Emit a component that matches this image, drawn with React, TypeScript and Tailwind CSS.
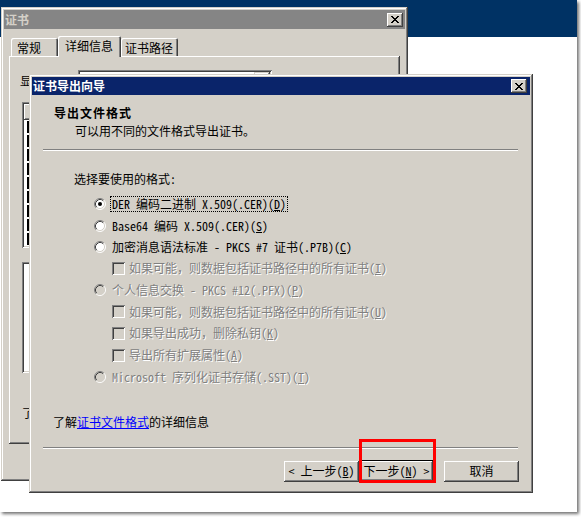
import React from "react";

function CloseX() {
  return (
    <svg width="8" height="7" viewBox="0 0 8 7" shapeRendering="crispEdges">
      <path
        fill="#000"
        d="M0 0h2v1H0z M6 0h2v1H6z M1 1h2v1H1z M5 1h2v1H5z M2 2h4v1H2z M3 3h2v1H3z M2 4h4v1H2z M1 5h2v1H1z M5 5h2v1H5z M0 6h2v1H0z M6 6h2v1H6z"
      />
    </svg>
  );
}

function CloseButton() {
  return (
    <div className="w-[16px] h-[14px] bg-[#d4d0c8] flex items-center justify-center shadow-[inset_-1px_-1px_#404040,inset_1px_1px_#ffffff,inset_-2px_-2px_#808080,inset_2px_2px_#d4d0c8]">
      <CloseX />
    </div>
  );
}

function Radio({ checked, disabled }: { checked?: boolean; disabled?: boolean }) {
  return (
    <svg width="12" height="12" viewBox="0 0 12 12" className="shrink-0">
      <circle cx="6" cy="6" r="5" fill={disabled ? "#d4d0c8" : "#ffffff"} />
      <path d="M2.11 9.89A5.5 5.5 0 0 1 9.89 2.11" fill="none" stroke="#808080" />
      <path d="M2.82 9.18A4.5 4.5 0 0 1 9.18 2.82" fill="none" stroke="#404040" />
      <path d="M9.89 2.11A5.5 5.5 0 0 1 2.11 9.89" fill="none" stroke="#ffffff" />
      <path d="M9.18 2.82A4.5 4.5 0 0 1 2.82 9.18" fill="none" stroke="#d4d0c8" />
      {checked && <circle cx="6" cy="6" r="2" fill="#000000" />}
    </svg>
  );
}

function Checkbox() {
  return (
    <span className="block shrink-0 w-[13px] h-[13px] bg-[#d4d0c8] shadow-[inset_1px_1px_#808080,inset_-1px_-1px_#ffffff,inset_2px_2px_#404040,inset_-2px_-2px_#d4d0c8]" />
  );
}

function U({ c }: { c: string }) {
  return <span className="underline underline-offset-1">{c}</span>;
}

const dis = "text-[#808080] [text-shadow:1px_1px_0_#ffffff]";

export default function App() {
  return (
    <div className="w-[581px] h-[517px] bg-white [font-family:'Noto_Sans_Mono_CJK_SC','Noto_Sans_CJK_SC','Noto_Sans',sans-serif] text-[12px] leading-[14px] text-black">
      <div className="relative w-[577px] h-[512px] bg-white overflow-hidden shadow-[2px_2px_3px_rgba(0,0,0,0.55)]">
        {/* desktop blue band */}
        <div className="h-[37px] w-full bg-[#003264]" />

        {/* background dialog: 证书 */}
        <div className="absolute left-[1px] top-[7px] w-[407px] h-[474px] bg-[#d4d0c8] p-[3px] flex flex-col shadow-[inset_-1px_-1px_#404040,inset_1px_1px_#d4d0c8,inset_-2px_-2px_#808080,inset_2px_2px_#ffffff]">
          <div className="h-[19px] bg-[#858585] flex items-center justify-between pl-[1px] pr-[2px]">
            <span className="font-bold text-[#d4d0c8]">证书</span>
            <CloseButton />
          </div>
          {/* tabs */}
          <div className="mt-[7px] ml-[7px] h-[20px] flex items-end relative z-10">
            <div className="w-[47px] h-[18px] pl-[6px] pt-[3px] rounded-t-[2px] bg-[#d4d0c8] shadow-[inset_1px_1px_#ffffff,inset_-1px_0_#404040,inset_-2px_0_#808080]">
              常规
            </div>
            <div className="w-[63px] h-[21px] -mb-[1px] pl-[7px] pt-[3px] rounded-t-[2px] bg-[#d4d0c8] shadow-[inset_1px_1px_#ffffff,inset_-1px_0_#404040,inset_-2px_0_#808080]">
              详细信息
            </div>
            <div className="w-[57px] h-[18px] pl-[4px] pt-[3px] rounded-t-[2px] bg-[#d4d0c8] shadow-[inset_1px_1px_#ffffff,inset_-1px_0_#404040,inset_-2px_0_#808080]">
              证书路径
            </div>
          </div>
          {/* tab panel */}
          <div className="ml-[5px] w-[391px] h-[388px] flex flex-col shadow-[inset_-1px_-1px_#404040,inset_1px_1px_#ffffff,inset_-2px_-2px_#808080]">
            <div className="mt-[14px] ml-[11px] h-[21px] flex items-center">
              <span className="w-[58px]">
                显示(<U c="S" />):
              </span>
              <div className="w-[194px] h-[21px] bg-white flex justify-end p-[2px] shadow-[inset_1px_1px_#808080,inset_-1px_-1px_#ffffff,inset_2px_2px_#404040,inset_-2px_-2px_#d4d0c8]">
                <div className="w-[16px] h-full bg-[#d4d0c8] shadow-[inset_-1px_-1px_#404040,inset_1px_1px_#d4d0c8,inset_-2px_-2px_#808080,inset_2px_2px_#ffffff]" />
              </div>
            </div>
            <div className="mt-[11px] ml-[13px] w-[366px] h-[146px] bg-white p-[2px] flex flex-col shadow-[inset_1px_1px_#808080,inset_-1px_-1px_#ffffff,inset_2px_2px_#404040,inset_-2px_-2px_#d4d0c8]">
              <div className="h-[16px] bg-[#d4d0c8] shadow-[inset_-1px_-1px_#404040,inset_1px_1px_#ffffff,inset_-2px_-2px_#808080]" />
              <div className="flex-1 ml-[3px] mt-[1px] w-[2px] bg-[repeating-linear-gradient(to_bottom,#000_0px,#000_12px,#fff_12px,#fff_14px)]" />
            </div>
            <div className="mt-[14px] ml-[13px] w-[366px] h-[111px] bg-white shadow-[inset_1px_1px_#808080,inset_-1px_-1px_#ffffff,inset_2px_2px_#404040,inset_-2px_-2px_#d4d0c8]" />
            <div className="mt-[33px] ml-[13px]">了解证书详细信息</div>
          </div>
        </div>

        {/* wizard dialog: 证书导出向导 */}
        <div className="absolute left-[29px] top-[74px] w-[504px] h-[419px] bg-[#d4d0c8] p-[3px] flex flex-col shadow-[inset_-1px_-1px_#404040,inset_1px_1px_#d4d0c8,inset_-2px_-2px_#808080,inset_2px_2px_#ffffff]">
          <div className="h-[18px] bg-[#0a246a] flex items-center justify-between pl-[1px] pr-[3px]">
            <span className="font-bold text-white">证书导出向导</span>
            <CloseButton />
          </div>

          <div className="mt-[11px] ml-[22px] font-bold tracking-[1px]">导出文件格式</div>
          <div className="mt-[4px] ml-[43px]">可以用不同的文件格式导出证书。</div>
          <div className="mt-[11px] ml-[11px] w-[475px] border-t border-b border-t-[#808080] border-b-white" />

          <div className="mt-[21px] ml-[42px]">选择要使用的格式:</div>

          <div className="mt-[6px] flex flex-col">
            <div className="h-[23px] pl-[62px] flex items-center">
              <Radio checked />
              <span className="ml-[4px] px-[1px] border border-dotted border-black">
                DER 编码二进制 X.509(.CER)(<U c="D" />)
              </span>
            </div>
            <div className="h-[21px] pl-[62px] flex items-center">
              <Radio />
              <span className="ml-[6px]">
                Base64 编码 X.509(.CER)(<U c="S" />)
              </span>
            </div>
            <div className="h-[21px] pl-[62px] flex items-center">
              <Radio />
              <span className="ml-[6px]">
                加密消息语法标准 - PKCS #7 证书(.P7B)(<U c="C" />)
              </span>
            </div>
            <div className="h-[22px] pl-[80px] flex items-center">
              <Checkbox />
              <span className={`ml-[4px] ${dis}`}>
                如果可能，则数据包括证书路径中的所有证书(<U c="I" />)
              </span>
            </div>
            <div className="h-[22px] pl-[62px] flex items-center">
              <Radio disabled />
              <span className={`ml-[6px] ${dis}`}>
                个人信息交换 - PKCS #12(.PFX)(<U c="P" />)
              </span>
            </div>
            <div className="h-[21px] pl-[80px] flex items-center">
              <Checkbox />
              <span className={`ml-[4px] ${dis}`}>
                如果可能，则数据包括证书路径中的所有证书(<U c="U" />)
              </span>
            </div>
            <div className="h-[22px] pl-[80px] flex items-center">
              <Checkbox />
              <span className={`ml-[4px] ${dis}`}>
                如果导出成功，删除私钥(<U c="K" />)
              </span>
            </div>
            <div className="h-[22px] pl-[80px] flex items-center">
              <Checkbox />
              <span className={`ml-[4px] ${dis}`}>
                导出所有扩展属性(<U c="A" />)
              </span>
            </div>
            <div className="h-[22px] pl-[62px] flex items-center">
              <Radio disabled />
              <span className={`ml-[6px] ${dis}`}>
                Microsoft 序列化证书存储(.SST)(<U c="T" />)
              </span>
            </div>
          </div>

          <div className="mt-[27px] ml-[21px]">
            了解<span className="text-[#0000ff] underline underline-offset-1">证书文件格式</span>的详细信息
          </div>

          <div className="mt-[18px] ml-[11px] w-[475px] border-t border-b border-t-[#808080] border-b-white" />

          <div className="mt-[11px] ml-[252px] flex items-center">
            <div className="w-[75px] h-[21px] flex items-center justify-center bg-[#d4d0c8] shadow-[inset_-1px_-1px_#404040,inset_1px_1px_#ffffff,inset_-2px_-2px_#808080,inset_2px_2px_#d4d0c8]">
              &lt; 上一步(<U c="B" />)
            </div>
            <div className="ml-[0px] w-[75px] h-[22px] flex items-center justify-center bg-[#d4d0c8] border border-black shadow-[inset_-1px_-1px_#404040,inset_1px_1px_#ffffff,inset_-2px_-2px_#808080]">
              下一步(<U c="N" />) &gt;
            </div>
            <div className="ml-[10px] w-[75px] h-[21px] flex items-center justify-center bg-[#d4d0c8] shadow-[inset_-1px_-1px_#404040,inset_1px_1px_#ffffff,inset_-2px_-2px_#808080,inset_2px_2px_#d4d0c8]">
              取消
            </div>
          </div>
        </div>

        {/* red highlight box */}
        <div className="absolute left-[359px] top-[439px] w-[77px] h-[44px] border-[3px] border-[#ff0000]" />
      </div>
    </div>
  );
}
